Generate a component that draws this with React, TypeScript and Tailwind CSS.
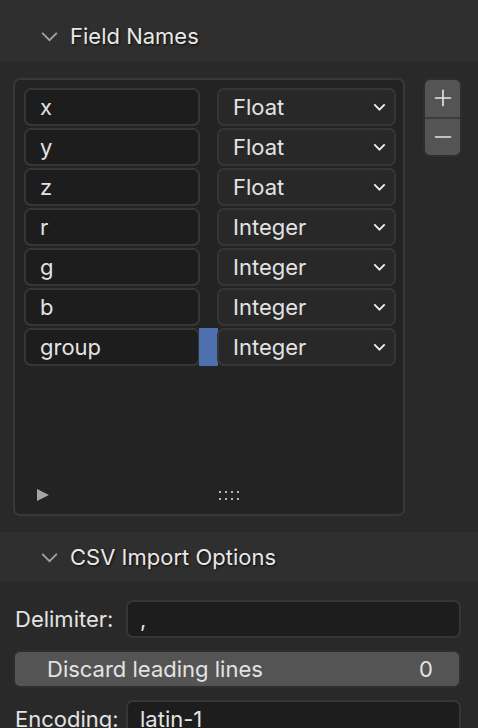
import { Plus, Minus } from 'lucide-react';

const font = { fontFamily: 'Inter, "Noto Sans", sans-serif' };

const fields: [string, string][] = [
  ['x', 'Float'],
  ['y', 'Float'],
  ['z', 'Float'],
  ['r', 'Integer'],
  ['g', 'Integer'],
  ['b', 'Integer'],
  ['group', 'Integer'],
];

function Chevron({ className, w = 2 }: { className?: string; w?: number }) {
  return (
    <svg viewBox="0 0 20 12" className={className} fill="none" stroke="currentColor" strokeWidth={w}>
      <path d="M2 2 L10 10 L18 2" />
    </svg>
  );
}

function PanelHeader({ title }: { title: string }) {
  return (
    <div className="flex h-[50px] items-center bg-[#2f2f2f] pl-[40px]">
      <Chevron className="h-[11px] w-[19px] text-[#a3a3a3]" />
      <span className="ml-[11px] text-[#e8e8e8] [text-shadow:1px_1px_2px_rgba(0,0,0,0.8)]">{title}</span>
    </div>
  );
}

export default function App() {
  return (
    <main className="h-[728px] w-[478px] overflow-hidden bg-[#292929] text-[22px] leading-none text-[#e3e3e3]" style={font}>
      <div className="h-[11px] bg-[#2f2f2f]" />
      <PanelHeader title="Field Names" />

      <div className="flex gap-[18px] pl-[13px] pt-[17px]">
        <div className="flex h-[438px] w-[392px] flex-col rounded-[7px] border-2 border-[#383838] bg-[#232323] pl-[9px] pt-[8px]">
          <div className="flex flex-col gap-[2px]">
            {fields.map(([name, type], i) => (
              <div key={name} className="flex h-[38px] w-[372px]">
                <div className="flex w-[176px] items-center rounded-[7px] border-2 border-[#363636] bg-[#1d1d1d] pl-[14px]">
                  {name}
                </div>
                <div className={'-mx-[1px] w-[19px] ' + (i === fields.length - 1 ? 'bg-[#4e6fae]' : '')} />
                <div className="flex w-[179px] items-center justify-between rounded-[7px] border-2 border-[#363636] bg-[#282828] pl-[14px] pr-[8px]">
                  <span>{type}</span>
                  <Chevron className="h-[8px] w-[13px] text-[#ececec]" w={3} />
                </div>
              </div>
            ))}
          </div>
          <div className="mt-auto mb-[13px] flex items-center">
            <svg viewBox="0 0 12 12" className="ml-[13px] h-[12px] w-[12px] text-[#a6a6a6]">
              <path d="M0 0 L12 6 L0 12 Z" fill="currentColor" />
            </svg>
            <div className="ml-[170px] grid grid-cols-4 gap-x-[4px] gap-y-[5px]">
              {Array.from({ length: 8 }).map((_, k) => (
                <div key={k} className="h-[2px] w-[2px] bg-[#b8b8b8]" />
              ))}
            </div>
          </div>
        </div>

        <div className="flex h-[79px] w-[39px] flex-col overflow-hidden rounded-[7px] border-2 border-[#2e2e2e] bg-[#545454]">
          <div className="flex flex-1 items-center justify-center border-b-2 border-[#3c3c3c]">
            <Plus className="h-[26px] w-[26px] text-[#e6e6e6]" strokeWidth={1.5} />
          </div>
          <div className="flex flex-1 items-center justify-center">
            <Minus className="h-[26px] w-[26px] text-[#e6e6e6]" strokeWidth={1.5} />
          </div>
        </div>
      </div>

      <div className="mt-[16px]">
        <PanelHeader title="CSV Import Options" />
      </div>

      <div className="flex flex-col gap-[12px] pl-[13px] pr-[17px] pt-[18px]">
        <div className="flex h-[38px] items-center">
          <span className="w-[113px] pl-[2px]">Delimiter:</span>
          <div className="flex h-full flex-1 items-center rounded-[7px] border-2 border-[#363636] bg-[#1d1d1d] pl-[12px]">,</div>
        </div>
        <div className="flex h-[38px] items-center justify-between rounded-[7px] border-2 border-[#2e2e2e] bg-[#545454] pl-[32px] pr-[26px]">
          <span>Discard leading lines</span>
          <span>0</span>
        </div>
        <div className="flex h-[38px] items-center">
          <span className="w-[113px] pl-[2px]">Encoding:</span>
          <div className="flex h-full flex-1 items-center rounded-[7px] border-2 border-[#363636] bg-[#1d1d1d] pl-[12px]">latin-1</div>
        </div>
      </div>
    </main>
  );
}
